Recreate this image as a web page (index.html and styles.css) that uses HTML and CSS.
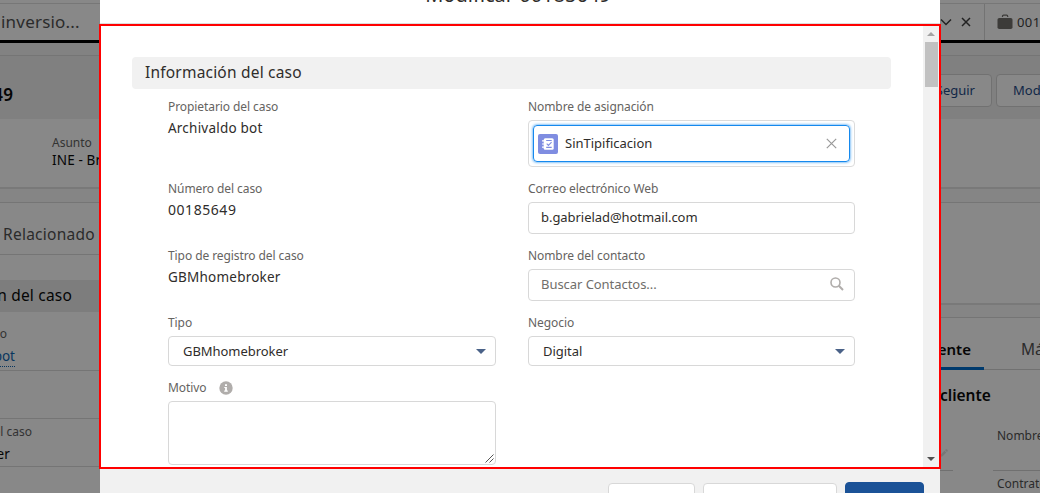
FILE: index.html
```html
<!DOCTYPE html>
<html lang="es">
<head>
<meta charset="utf-8">
<title>Modificar 00185649</title>
<link rel="stylesheet" href="styles.css">
</head>
<body>
<div class="page">
  <div class="side left">
    <div class="strip"></div>
    <div class="tabbar"><span class="tabname">inversio...</span></div>
    <div class="gap12"></div>
    <div class="record"><b class="num">00185649</b></div>
    <div class="summary"><span class="lbl">Asunto</span><span class="val">INE - Broker</span></div>
    <div class="gap14"></div>
    <div class="tabs"><span class="rel">Relacionado</span></div>
    <div class="details">
      <div class="dsection">Información del caso</div>
      <div class="drow d1"><span class="lbl">Propietario del caso</span><a class="link">Archivaldo bot</a></div>
      <div class="drow d2"></div>
      <div class="drow d3"><span class="lbl">Tipo de registro del caso</span><span class="val">GBMhomebroker</span></div>
    </div>
  </div>
  <div class="middle"></div>
  <div class="side right">
    <div class="strip"></div>
    <div class="tabbar">
      <div class="tabend">
        <svg width="12" height="8" viewBox="0 0 12 8"><path d="M1 1.5 6 6.5 11 1.5" class="ink"/></svg>
        <svg width="10" height="10" viewBox="0 0 10 10"><path d="M1 1 9 9M9 1 1 9" class="ink"/></svg>
      </div>
      <div class="casetab">
        <svg width="16" height="16" viewBox="0 0 16 16"><path d="M5.500 3V2.300Q5.500 1.200 6.600 1.200h3Q10.700 1.200 10.700 2.300V3" fill="none" stroke="#3c3b39" stroke-width="1.200"/><rect x=".5" y="4" width="15" height="11" rx="1.800" fill="#3c3b39"/></svg>
        <span>00185649</span>
      </div>
    </div>
    <div class="gap12"></div>
    <div class="record actions"><span class="btn seguir">Seguir</span><span class="btn mod">Modificar</span></div>
    <div class="summary"></div>
    <div class="gap14"></div>
    <div class="card"></div>
    <div class="gap14 g13"></div>
    <div class="rtabs"><b>Cliente</b><span>Más</span></div>
    <div class="rtitle"><b>cliente</b></div>
    <div class="rfields">
      <div class="rcell"><svg width="8" height="8" viewBox="0 0 8 8"><path d="M0 8 .8 5.400 4.500 1.700 6.300 3.500 2.600 7.200ZM5.100 1.100 6 .2Q6.500 0 7 .5L7.700 1.300Q8 1.700 7.600 2.200L6.900 2.900Z" fill="#777"/></svg></div>
      <div class="rcell named">Nombre</div>
    </div>
    <div class="contract">Contrato</div>
  </div>

  <div class="modal">
    <div class="mhead"><h2>Modificar 00185649</h2></div>
    <div class="mbody">
      <div class="form">
        <h3 class="section">Información del caso</h3>
        <div class="grid">
          <div class="field"><label>Propietario del caso</label><p>Archivaldo bot</p></div>
          <div class="field"><label>Nombre de asignación</label>
            <div class="lookup"><div class="pill">
              <svg width="20" height="20" viewBox="0 0 20 20"><rect width="20" height="20" rx="2" fill="#7f8de1"/><rect x="5.700" y="4.200" width="10" height="11.600" rx="1.500" fill="#fff"/><path d="M4 6.800h3M4 10h3M4 13.200h3" stroke="#fff" stroke-width="1.200"/><path d="M8.200 6.500h5.500M8.200 13.400h5.500M8.700 9.700 10.400 11.400 13.600 8.200" fill="none" stroke="#7f8de1" stroke-width="1.100"/></svg>
              <span>SinTipificacion</span>
              <svg class="clear" width="11" height="11" viewBox="0 0 11 11"><path d="M.8.8 10.200 10.200M10.200.8.8 10.200" stroke="#999" stroke-width="1.200"/></svg>
            </div></div></div>
          <div class="field"><label>Número del caso</label><p class="digits">00185649</p></div>
          <div class="field"><label>Correo electrónico Web</label><div class="input">b.gabrielad@hotmail.com</div></div>
          <div class="field"><label>Tipo de registro del caso</label><p>GBMhomebroker</p></div>
          <div class="field"><label>Nombre del contacto</label><div class="input ph"><span>Buscar Contactos...</span>
            <svg width="14" height="14" viewBox="0 0 14 14"><circle cx="5.500" cy="5.500" r="4.500" fill="none" stroke="#b0adab" stroke-width="1.600"/><path d="M8.800 8.800 13 13" stroke="#b0adab" stroke-width="2"/></svg></div></div>
          <div class="field"><label>Tipo</label><div class="input select"><span>GBMhomebroker</span><i></i></div></div>
          <div class="field"><label>Negocio</label><div class="input select"><span>Digital</span><i></i></div></div>
          <div class="field"><label class="info">Motivo <svg width="14" height="14" viewBox="0 0 14 14"><circle cx="7" cy="7" r="6.700" fill="#b0adab"/><path d="M6 3.200h2v1.700H6zM5.300 6h2.600v3.600h.9v1.100H5.200V9.600h.9V7.100h-.8z" fill="#fff"/></svg></label>
            <div class="area"><svg width="9" height="9" viewBox="0 0 9 9"><path d="M.5 8.500 8.500.5M4.500 8.500 8.500 4.500" stroke="#555" stroke-width="1"/></svg></div></div>
        </div>
      </div>
      <div class="scroll"><i class="up"></i><div class="thumb"></div><i class="down"></i></div>
    </div>
    <div class="mfoot"><span class="fb b1"></span><span class="fb b2"></span><span class="fb b3"></span></div>
  </div>
</div>
</body>
</html>
```
FILE: styles.css
```css
* { box-sizing: border-box; }
body { margin: 0; font-family: "Noto Sans", "Open Sans", sans-serif; font-size: 13px; color: #2f2d2b; }
h2, h3, p { margin: 0; font-weight: 400; }
svg { display: block; flex: none; }
.page { position: relative; width: 1040px; height: 493px; overflow: hidden; background: #868686; display: grid; grid-template-columns: 100px 840px 100px; }
.side { overflow: hidden; height: 493px; display: flex; flex-direction: column; white-space: nowrap; color: #050505; }
.side > div { flex: none; }
.strip { height: 4px; background: #888; border-bottom: 1px solid #777; }
.tabbar { height: 39px; background: #888; border-bottom: 3px solid #000; display: flex; align-items: center; }
.tabname { font-size: 17px; letter-spacing: .2px; color: #2b2b2b; padding-left: 1px; margin-top: -2px; }
.gap12 { height: 13px; background: #828282; border-bottom: 1px solid #757575; }
.record { height: 63px; background: #808080; display: flex; align-items: center; }
.left .record { width: 13px; justify-content: flex-end; background: none; padding-top: 14px; }
.left { background: linear-gradient(#808080, #808080) 0 56px / 100% 63px no-repeat #868686; }
.num { font-size: 17px; font-weight: 600; letter-spacing: .3px; margin-right: -.3px; }
.summary { height: 70px; background: #888; border-bottom: 2px solid #797979; padding: 15px 0 0 52px; display: flex; flex-direction: column; }
.lbl { font-size: 12px; line-height: 18px; color: #333; }
.val { font-size: 13.500px; line-height: 16px; letter-spacing: .15px; }
.gap14 { height: 14px; background: #858585; border-bottom: 1px solid #757575; }
.tabs { height: 52px; background: #888; border-bottom: 1px solid #757575; padding: 19px 0 0 3px; }
.rel { display: block; font-size: 15.500px; letter-spacing: .25px; line-height: 24px; color: #2b2b2b; }
.details { height: 238px; background: #888; padding-top: 25px; }
.dsection { height: 32px; background: #7d7d7d; display: flex; justify-content: flex-end; padding-right: 28px; font-size: 15.500px; line-height: 31px; letter-spacing: .2px; }
.drow { border-bottom: 1px solid #757575; display: flex; flex-direction: column; align-items: flex-end; }
.d1 { height: 59px; padding: 13px 85px 0 0; }
.d1 .lbl { margin-right: 8px; }
.link { font-size: 13.500px; line-height: 20px; margin-top: 3px; color: #08365f; border-bottom: 1px dotted #08365f; }
.d2 { height: 48px; }
.d3 { height: 48px; padding: 4px 68px 0 0; }
.d3 .val { margin: 5px 22px 0 0; line-height: 17px; }
.tabend { width: 45px; flex: none; height: 36px; border-right: 1px solid #737373; display: flex; align-items: center; gap: 9px; }
.ink { fill: none; stroke: #222; stroke-width: 1.500; }
.casetab { display: flex; align-items: center; gap: 4px; padding-left: 12px; font-size: 13px; letter-spacing: .4px; color: #222; }
.actions { gap: 4px; padding-top: 5px; }
.btn { height: 33px; line-height: 31px; border: 1px solid #717171; background: #888; border-radius: 4px; color: #102747; font-size: 13px; flex: none; }
.seguir { width: 82px; margin-left: -30px; text-align: right; padding-right: 16px; }
.mod { width: 90px; padding-left: 16px; }
.card { height: 102px; background: #888; border-bottom: 2px solid #797979; }
.g13 { height: 13px; }
.rtabs { height: 52px; background: #888; border-bottom: 1px solid #717171; display: flex; font-size: 15px; line-height: 63px; color: #2b2b2b; }
.rtabs b { width: 44px; height: 52px; flex: none; display: flex; justify-content: flex-end; padding-right: 13px; border-bottom: 3px solid #003a6d; font-weight: 600; color: #050505; }
.rtabs span { padding-left: 37px; font-size: 15.500px; }
.rtitle { height: 50px; background: #888; font-size: 15.500px; line-height: 51px; }
.rtitle b { font-weight: 600; }
.rfields { height: 51px; background: #888; display: flex; gap: 40px; }
.rcell { width: 13px; flex: none; border-bottom: 1px solid #707070; padding-top: 29px; }
.named { width: 60px; padding: 6px 0 0 4px; font-size: 12px; line-height: 20px; color: #2b2b2b; }
.contract { height: 30px; background: #888; padding: 3px 0 0 57px; font-size: 12px; line-height: 20px; color: #2b2b2b; }

.modal { position: absolute; left: 99px; top: 0; width: 842px; height: 493px; display: flex; flex-direction: column; white-space: nowrap; }
.mhead { height: 24px; margin: 0 1px; background: #fff; border-bottom: 1px solid #ddd; overflow: hidden; display: flex; justify-content: center; align-items: flex-end; padding-bottom: 15px; }
.mhead h2 { font-size: 20px; line-height: 28px; letter-spacing: 0; padding-right: 4px; margin-bottom: -1px; }
.mbody { height: 445px; border: 2px solid #f00; background: #fff; display: flex; justify-content: space-between; }
.form { width: 790px; padding: 31px 0 0 31px; }
.section { height: 32px; border-radius: 4px; background: #f1f1f1; padding-left: 13px; font-size: 15.500px; line-height: 31px; letter-spacing: .2px; }
.grid { margin: 9px 0 0 36px; display: grid; grid-template-columns: 328px 327px; column-gap: 32px; grid-template-rows: 82px 67px 67px 65px 86px; }
.field { display: flex; flex-direction: column; }
label { height: 18px; font-size: 12px; line-height: 18px; letter-spacing: -.08px; color: #656361; }
.field p { margin-top: 2px; font-size: 13.500px; line-height: 20px; letter-spacing: .22px; }
.field .digits { font-size: 14px; letter-spacing: .55px; }
.lookup { margin-top: 4px; height: 47px; border: 1px solid #dbdbdb; border-radius: 4px; padding: 4px; }
.pill { height: 37px; border: 1px solid #1589ee; border-radius: 4px; box-shadow: 0 0 3px #1589ee; display: flex; align-items: center; padding: 0 12px 0 4px; }
.pill span { flex: 1; margin: -2px 0 0 7px; font-size: 13px; }
.clear { margin-top: -1px; }
.input { margin-top: 4px; height: 32px; border: 1px solid #d8d8d8; border-radius: 4px; padding: 0 10px 2px 12px; display: flex; align-items: center; justify-content: space-between; font-size: 13px; letter-spacing: -.05px; }
.ph { color: #706e6b; }
.select { height: 30px; padding: 0 9px 0 14px; }
.select i { border: 5px solid transparent; border-top-color: #4a6288; border-bottom: 0; }
.info { display: flex; align-items: center; gap: 13px; }
.area { margin-top: 4px; height: 64px; border: 1px solid #d8d8d8; border-radius: 4px; display: flex; align-items: flex-end; justify-content: flex-end; padding: 0 1px 1px 0; }
.scroll { width: 16px; background: #f1f1f1; display: flex; flex-direction: column; align-items: center; }
.up { margin-top: 6px; border: 4px solid transparent; border-bottom-color: #a3a3a3; border-top: 0; }
.thumb { width: 13px; height: 45px; margin: 6px 0 0 1px; background: #c1c1c1; }
.down { margin: auto 0 6px; border: 4px solid transparent; border-top-color: #505050; border-bottom: 0; }
.mfoot { height: 24px; margin: 0 1px; background: #f1f1f1; display: flex; justify-content: flex-end; gap: 8px; padding: 14px 16px 0 0; overflow: hidden; }
.fb { height: 32px; border: 1px solid #d8d8d8; background: #fff; border-radius: 4px; }
.b1 { width: 87px; }
.b2 { width: 134px; }
.b3 { width: 79px; margin-top: -1px; background: #1b5297; border-color: #1b5297; }
```
